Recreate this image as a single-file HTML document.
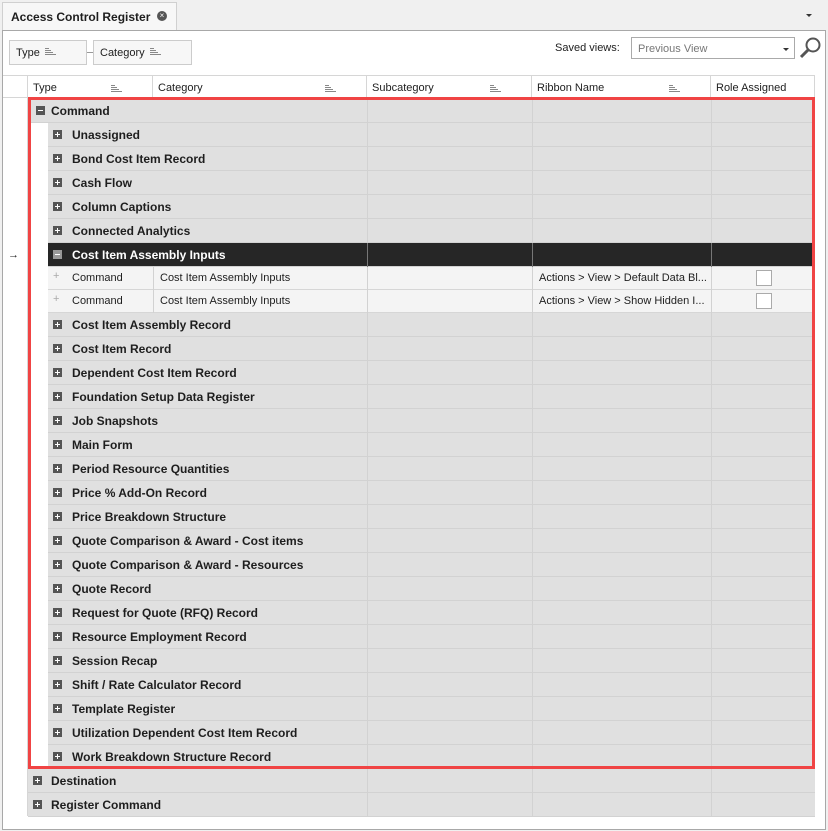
<!DOCTYPE html>
<html><head><meta charset="utf-8"><style>
*{box-sizing:border-box;margin:0;padding:0}
body{width:828px;height:831px;background:#f0f0f0;font-family:"Liberation Sans",Arial,sans-serif;font-size:11px;color:#1e1e1e;position:relative;overflow:hidden}
.a{position:absolute}
.tab{left:2px;top:2px;width:175px;height:29px;background:#f7f7f7;border:1px solid #d0d0d0;border-bottom:none;font-weight:bold;font-size:12px;padding:7px 0 0 8px}
.panel{left:2px;top:30px;width:824px;height:800px;background:#fff;border:1px solid #a8a8a8}
.fb{height:25px;border:1px solid #ccc;background:#f7f7f7;padding:6px 0 0 6px}
.sorti{display:inline-block;width:11px;height:8px;margin-left:5px;background:linear-gradient(#888,#888) 0 0/4px 1px no-repeat,linear-gradient(#888,#888) 0 2px/6px 1px no-repeat,linear-gradient(#888,#888) 0 4px/8px 1px no-repeat,linear-gradient(#888,#888) 0 6px/11px 1px no-repeat}
.hdr{top:75px;height:23px;border-right:1px solid #d6d6d6;border-bottom:1px solid #d6d6d6;background:#fff;padding:6px 0 0 5px}
.hdr .sorti{position:absolute;right:30px;top:9px}
.row{height:24px;background:#e0e0e0;border-bottom:1px solid #d2d2d2;font-weight:bold;font-size:12px;padding:5px 0 0 0}
.vl{width:1px;background:#d2d2d2}
.pb{position:absolute;width:9px;height:9px;background:#555;top:7px}
.pb:before{content:"";position:absolute;left:2px;top:4px;width:5px;height:1px;background:#fff}
.pb.p:after{content:"";position:absolute;left:4px;top:2px;width:1px;height:5px;background:#fff}
.sel{background:#262626;color:#fff}
.det{height:23px;background:#f4f4f4;border-bottom:1px solid #d6d6d6;font-weight:normal;padding:5px 0 0 0}
.cb{width:16px;height:16px;background:#fff;border:1px solid #aaa}
</style></head><body>
<div class="a tab">Access Control Register</div>
<div class="a" style="left:157px;top:11px;width:10px;height:10px;border-radius:50%;background:#555;color:#fff;font-size:8px;line-height:10px;text-align:center">×</div>
<div class="a" style="left:806px;top:14px;width:0;height:0;border-left:3px solid transparent;border-right:3px solid transparent;border-top:3px solid #333"></div>
<div class="a panel"></div>
<div class="a fb" style="left:9px;top:40px;width:78px">Type<span class="sorti"></span></div>
<div class="a" style="left:87px;top:52px;width:6px;height:1px;background:#999"></div>
<div class="a fb" style="left:93px;top:40px;width:99px">Category<span class="sorti"></span></div>
<div class="a" style="left:555px;top:42px">Saved views:</div>
<div class="a" style="left:631px;top:37px;width:164px;height:22px;border:1px solid #aaa;background:#fff;color:#777;padding:5px 0 0 6px">Previous View<div class="a" style="right:5px;top:10px;border-left:3px solid transparent;border-right:3px solid transparent;border-top:3px solid #333"></div></div>
<svg class="a" style="left:799px;top:36px" width="24" height="24"><circle cx="14" cy="9" r="6.5" fill="none" stroke="#555" stroke-width="2"/><line x1="9.5" y1="13.5" x2="2" y2="21" stroke="#555" stroke-width="3"/></svg>
<div class="a hdr" style="left:3px;width:25px;border-top:1px solid #d6d6d6"></div>
<div class="a hdr" style="left:28px;width:125px;border-top:1px solid #d6d6d6">Type<span class="sorti"></span></div>
<div class="a hdr" style="left:153px;width:214px;border-top:1px solid #d6d6d6">Category<span class="sorti"></span></div>
<div class="a hdr" style="left:367px;width:165px;border-top:1px solid #d6d6d6">Subcategory<span class="sorti"></span></div>
<div class="a hdr" style="left:532px;width:179px;border-top:1px solid #d6d6d6">Ribbon Name<span class="sorti"></span></div>
<div class="a hdr" style="left:711px;width:104px;border-top:1px solid #d6d6d6">Role Assigned</div>
<div class="a" style="left:3px;top:98px;width:25px;height:718px;border-right:1px solid #d6d6d6;background:#fff"></div>
<div class="a" style="left:8px;top:249px;font-size:11px">→</div>
<div id="g"></div>
<div class="a" style="left:28px;top:97px;width:787px;height:672px;border:3px solid #f04444"></div>
<script>
var items=["Unassigned","Bond Cost Item Record","Cash Flow","Column Captions","Connected Analytics","Cost Item Assembly Inputs","D","D","Cost Item Assembly Record","Cost Item Record","Dependent Cost Item Record","Foundation Setup Data Register","Job Snapshots","Main Form","Period Resource Quantities","Price % Add-On Record","Price Breakdown Structure","Quote Comparison & Award - Cost items","Quote Comparison & Award - Resources","Quote Record","Request for Quote (RFQ) Record","Resource Employment Record","Session Recap","Shift / Rate Calculator Record","Template Register","Utilization Dependent Cost Item Record","Work Breakdown Structure Record"];
var h="";
function lines(top,ht,c){return [367,532,711].map(function(x){return '<div class="a vl" style="left:'+x+'px;top:'+top+'px;height:'+ht+'px;'+(c?'background:'+c:'')+'"></div>'}).join("");}
function grp(top,left,txt,plus,sel,pad){
 h+='<div class="a row'+(sel?' sel':'')+'" style="left:'+left+'px;top:'+top+'px;width:'+(815-left)+'px"><span class="pb'+(plus?' p':'')+'" style="left:5px;'+(sel?'background:#999':'')+'"></span><span style="margin-left:'+(pad||24)+'px">'+txt+'</span></div>'+lines(top,24,sel?'#777':'');
}
grp(99,31,"Command",false,false,20);
var y=123,d=0;
items.forEach(function(t){
 if(t=="D"){
  var rib=d==0?"Actions &gt; View &gt; Default Data Bl...":"Actions &gt; View &gt; Show Hidden I...";d++;
  h+='<div class="a det" style="left:48px;top:'+y+'px;width:767px"><span class="a" style="left:5px;top:3px;color:#aaa">+</span><span class="a" style="left:24px;top:5px">Command</span><span class="a" style="left:112px;top:5px">Cost Item Assembly Inputs</span><span class="a" style="left:491px;top:5px">'+rib+'</span></div>'+'<div class="a vl" style="left:153px;top:'+y+'px;height:23px"></div>'+lines(y,23)+'<div class="a cb" style="left:756px;top:'+(y+3)+'px"></div>';
  y+=23;return;}
 var s=t=="Cost Item Assembly Inputs";
 grp(y,48,t,!s,s);y+=24;
});
grp(769,28,"Destination",true,false,23);
grp(793,28,"Register Command",true,false,23);
document.getElementById("g").innerHTML=h;
</script>
</body></html>
